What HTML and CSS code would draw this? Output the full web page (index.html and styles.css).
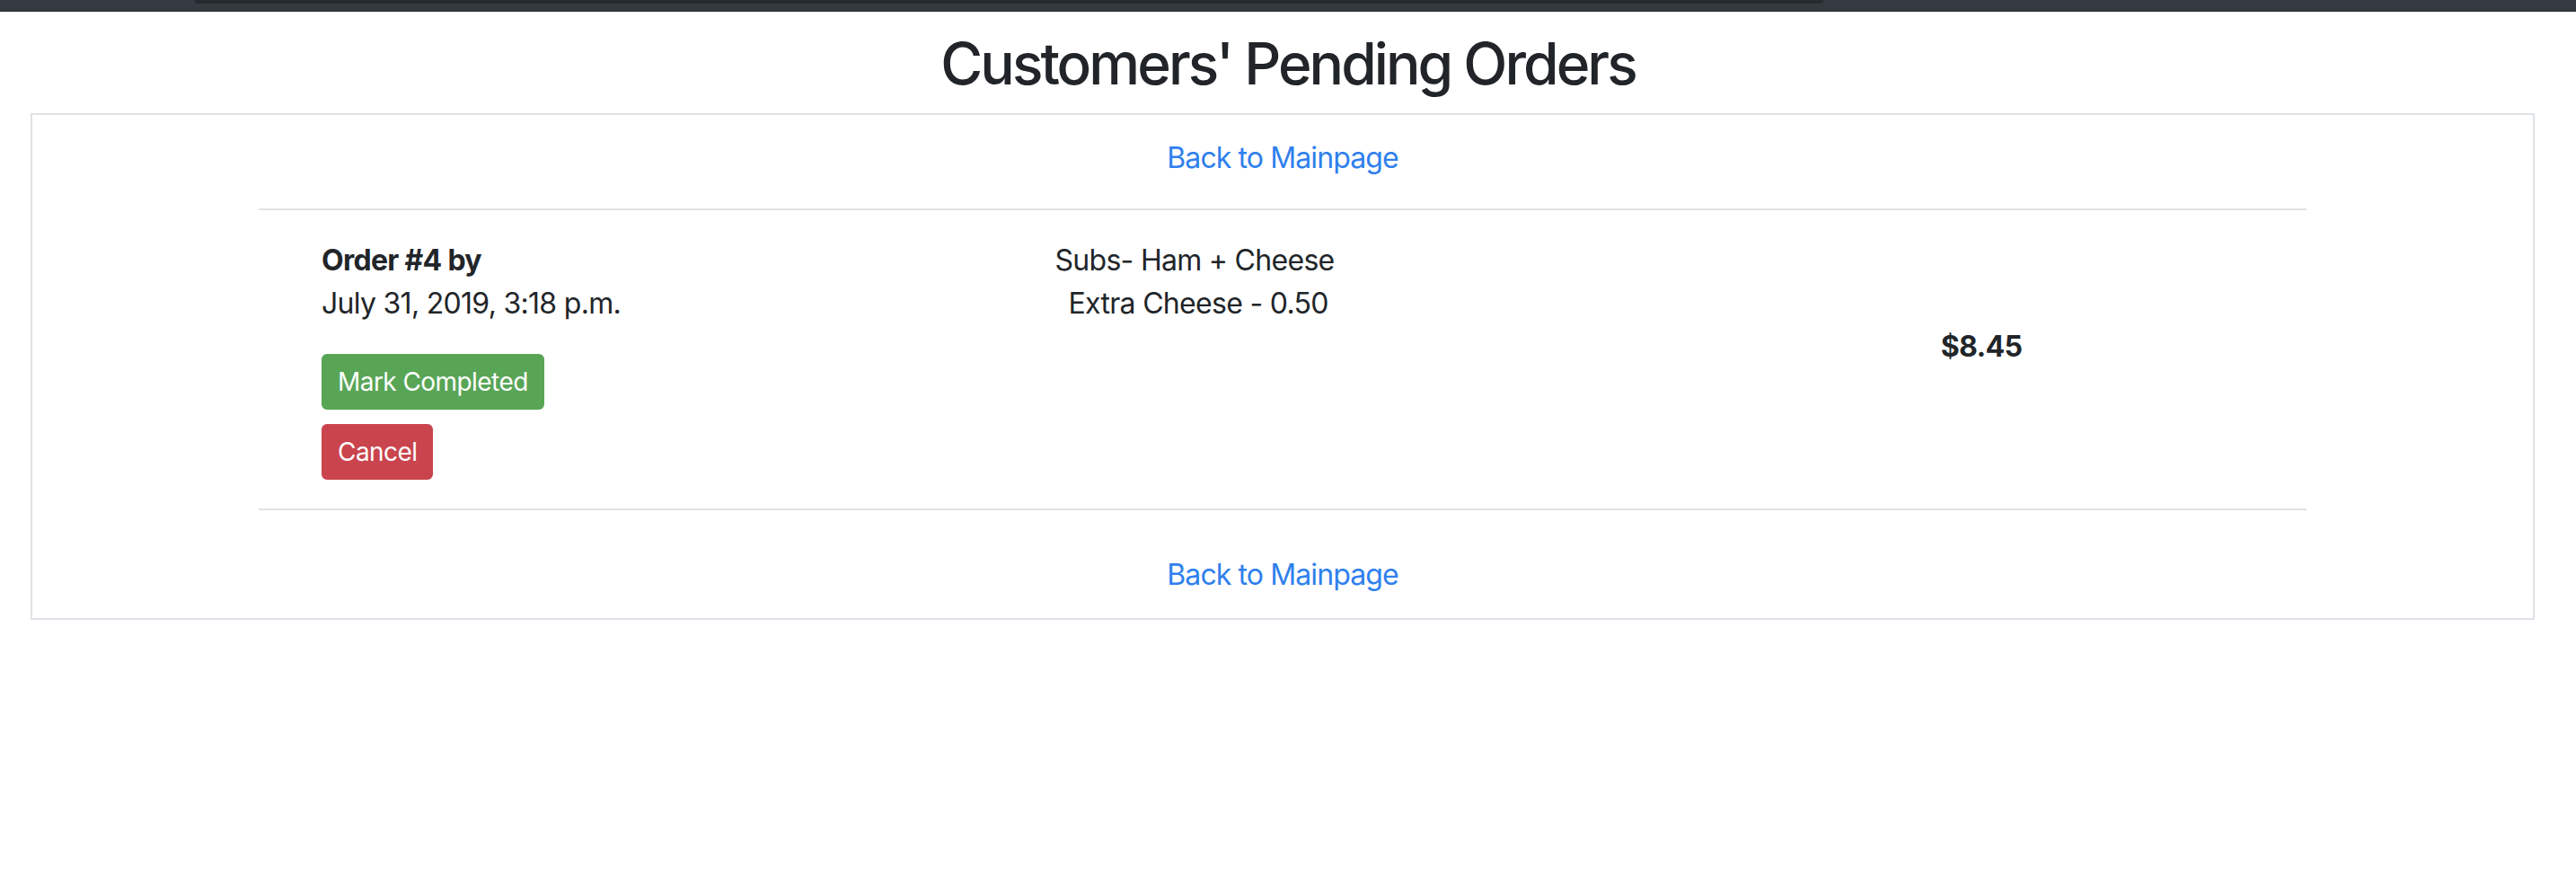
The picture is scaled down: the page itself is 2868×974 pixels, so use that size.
FILE: index.html
```html
<!DOCTYPE html>
<html lang="en">
<head>
<meta charset="utf-8">
<title>Customers' Pending Orders</title>
<link rel="stylesheet" href="styles.css">
</head>
<body>
<nav class="navbar"><div class="navbar-pill"></div></nav>
<h2 class="title">Customers' Pending Orders</h2>
<div class="board">
  <div class="back"><a href="#">Back to Mainpage</a></div>
  <div class="orders">
    <hr class="rule">
    <div class="order">
      <div class="order-info">
        <div class="order-title">Order #4 by</div>
        <div class="order-date">July 31, 2019, 3:18 p.m.</div>
        <div class="actions">
          <button class="btn btn-success">Mark Completed</button>
          <button class="btn btn-danger">Cancel</button>
        </div>
      </div>
      <div class="order-items">
        <div>Subs- Ham + Cheese</div>
        <div>&nbsp;Extra Cheese - 0.50</div>
      </div>
      <div class="order-total">$8.45</div>
    </div>
    <hr class="rule">
  </div>
  <div class="back back-bottom"><a href="#">Back to Mainpage</a></div>
</div>
</body>
</html>
```
FILE: styles.css
```css
html, body {
  margin: 0;
  padding: 0;
  background: #ffffff;
}
body {
  font-family: "Inter", "Helvetica Neue", Arial, sans-serif;
  font-size: 32px;
  line-height: 48px;
  letter-spacing: -0.022em;
  color: #212529;
}
.navbar {
  height: 12px;
  background: #343a40;
  border-bottom: 1px solid #23272b;
}
.navbar-pill {
  margin-left: 217px;
  width: 1813px;
  height: 4px;
  background: #272b30;
  border-radius: 0 0 10px 10px;
}
.title {
  margin: 20px 0 16px;
  text-align: center;
  font-size: 64px;
  font-weight: 500;
  line-height: 76.8px;
  letter-spacing: -0.046em;
}
.board {
  display: flex;
  flex-direction: column;
  margin: 0 46px 0 34px;
  border: 2px solid #dee2e6;
  padding: 24px 0;
}
.back {
  text-align: center;
}
.back a {
  color: #2f80ed;
  text-decoration: none;
  letter-spacing: -0.028em;
}
.back-bottom {
  margin-top: 16px;
}
.orders {
  width: 2280px;
  margin: 0 auto;
}
.rule {
  margin: 32px 0;
  border: 0;
  border-top: 2px solid #e0e2e6;
  height: 0;
}
.order {
  display: grid;
  grid-template-columns: 402px 1140px 612px;
  padding: 0 56px 0 70px;
}
.order-title {
  font-weight: 700;
}
.order-date {
  margin-bottom: 32px;
}
.actions {
  display: flex;
  flex-direction: column;
  align-items: flex-start;
  gap: 16px;
}
.btn {
  font-family: inherit;
  font-size: 28px;
  line-height: 42px;
  letter-spacing: -0.02em;
  padding: 8px 16px;
  border: 2px solid transparent;
  border-radius: 6px;
  color: #ffffff;
  cursor: pointer;
}
.btn-success {
  background: #58a556;
  border-color: #58a556;
}
.btn-danger {
  background: #c9444d;
  border-color: #c9444d;
}
.order-items {
  text-align: center;
}
.order-total {
  text-align: center;
  padding-top: 96px;
  font-weight: 700;
}
```
